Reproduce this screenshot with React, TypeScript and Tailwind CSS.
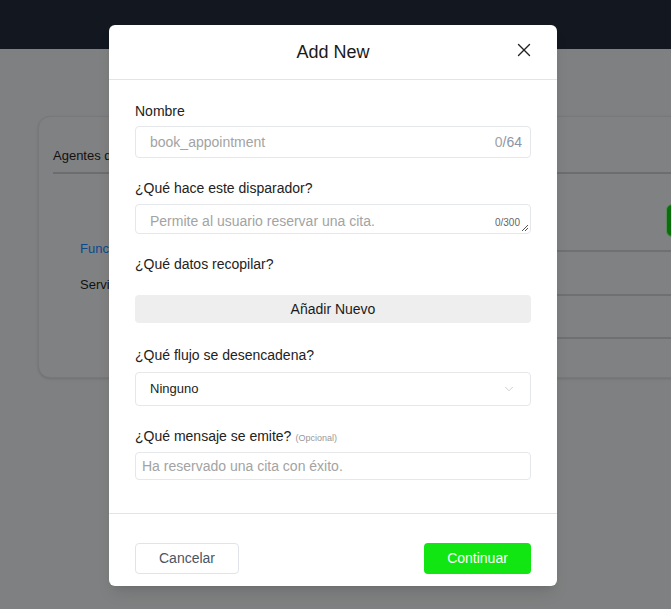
import React from 'react';
import { X, ChevronDown } from 'lucide-react';

function Background() {
  return (
    <div className="min-h-[609px] bg-[#7f8081]">
      <div className="h-[49px] bg-[#121720]" />
      <div className="pl-[38px] pt-[67px]">
        <div className="h-[262px] w-[700px] rounded-l-xl border border-[#77787a] bg-[#808182] shadow-sm">
          <div className="ml-[14px] border-b-2 border-[#6c6d6e] pt-[29px] pb-[6px] text-[13px] text-[#111]">
            Agentes de IA
          </div>
          <div className="grid grid-cols-[280px_1fr]">
            <div className="pl-[41px] pt-[67px] text-[13px] leading-4">
              <div className="text-[#0b4a8b]">Funciones</div>
              <div className="mt-[20px] text-[#111]">Servicios</div>
            </div>
            <div>
              <div className="h-[78px] border-b-2 border-[#6f7071] pt-[30px]">
                <div className="ml-[347px] h-[33px] w-[60px] rounded-md border border-[#5a8a5a] bg-[#0a6e0a]" />
              </div>
              <div className="h-[44px] border-b-2 border-[#6f7071]" />
              <div className="h-[43px] border-b-2 border-[#6f7071]" />
            </div>
          </div>
        </div>
      </div>
    </div>
  );
}

function Label({ children }: { children: React.ReactNode }) {
  return <div className="text-[14px] leading-5 text-[#222]">{children}</div>;
}

function Modal() {
  return (
    <div className="absolute left-[109px] top-[25px] flex h-[561px] w-[448px] flex-col rounded-md bg-white shadow-lg">
      <div className="relative flex h-[55px] items-center justify-center border-b border-[#e3e4e8]">
        <span className="text-[18px] text-[#1a1a1a]">Add New</span>
        <X className="absolute right-[22px] top-[14px] h-[22px] w-[22px] text-[#222]" strokeWidth={1.5} />
      </div>

      <div className="flex-1 px-[26px] pt-[21px]">
        <Label>Nombre</Label>
        <div className="mt-[5px] flex h-[32px] items-center justify-between rounded border border-[#e5e7eb] pl-[14px] pr-[8px]">
          <span className="text-[14px] text-[#a3a3a3]">book_appointment</span>
          <span className="text-[14px] text-[#8a94a6]">
            <span className="text-[#a3a3a3]">0</span>/64
          </span>
        </div>

        <div className="mt-[20px]">
          <Label>¿Qué hace este disparador?</Label>
        </div>
        <div className="relative mt-[6px] h-[30px] rounded border border-[#e5e7eb] px-[14px] pt-[4px]">
          <span className="text-[14px] text-[#a3a3a3]">Permite al usuario reservar una cita.</span>
          <span className="absolute right-[10px] top-[10px] text-[10px] text-[#666]">0/300</span>
          <svg className="absolute bottom-[1px] right-[1px]" width="8" height="8" viewBox="0 0 8 8">
            <path d="M7 1L1 7M7 4L4 7" stroke="#555" strokeWidth="1" />
          </svg>
        </div>

        <div className="mt-[20px]">
          <Label>¿Qué datos recopilar?</Label>
        </div>
        <button className="mt-[21px] flex h-[28px] w-full items-center justify-center rounded bg-[#eeeeee] text-[14px] text-[#1a1a1a]">
          Añadir Nuevo
        </button>

        <div className="mt-[22px]">
          <Label>¿Qué flujo se desencadena?</Label>
        </div>
        <div className="mt-[7px] flex h-[34px] items-center justify-between rounded border border-[#e5e7eb] px-[14px]">
          <span className="text-[13px] text-[#222]">Ninguno</span>
          <ChevronDown className="h-[14px] w-[14px] text-[#c4c7cc]" strokeWidth={1.5} />
        </div>

        <div className="mt-[20px] flex items-baseline gap-[4px]">
          <Label>¿Qué mensaje se emite?</Label>
          <span className="text-[9px] text-[#999]">(Opcional)</span>
        </div>
        <div className="mt-[6px] flex h-[28px] items-center rounded border border-[#e5e7eb] px-[6px]">
          <span className="text-[14px] text-[#a3a3a3]">Ha reservado una cita con éxito.</span>
        </div>
      </div>

      <div className="flex h-[73px] items-end justify-between border-t border-[#e3e4e8] px-[26px] pb-[12px]">
        <button className="h-[31px] w-[104px] rounded border border-[#e0e4ea] text-[14px] text-[#4b5563]">
          Cancelar
        </button>
        <button className="h-[31px] w-[107px] rounded bg-[#12e612] text-[14px] text-white">
          Continuar
        </button>
      </div>
    </div>
  );
}

export default function App() {
  return (
    <div className="relative h-[609px] w-[671px] overflow-hidden font-['Liberation_Sans',Arial,sans-serif]">
      <Background />
      <Modal />
    </div>
  );
}
